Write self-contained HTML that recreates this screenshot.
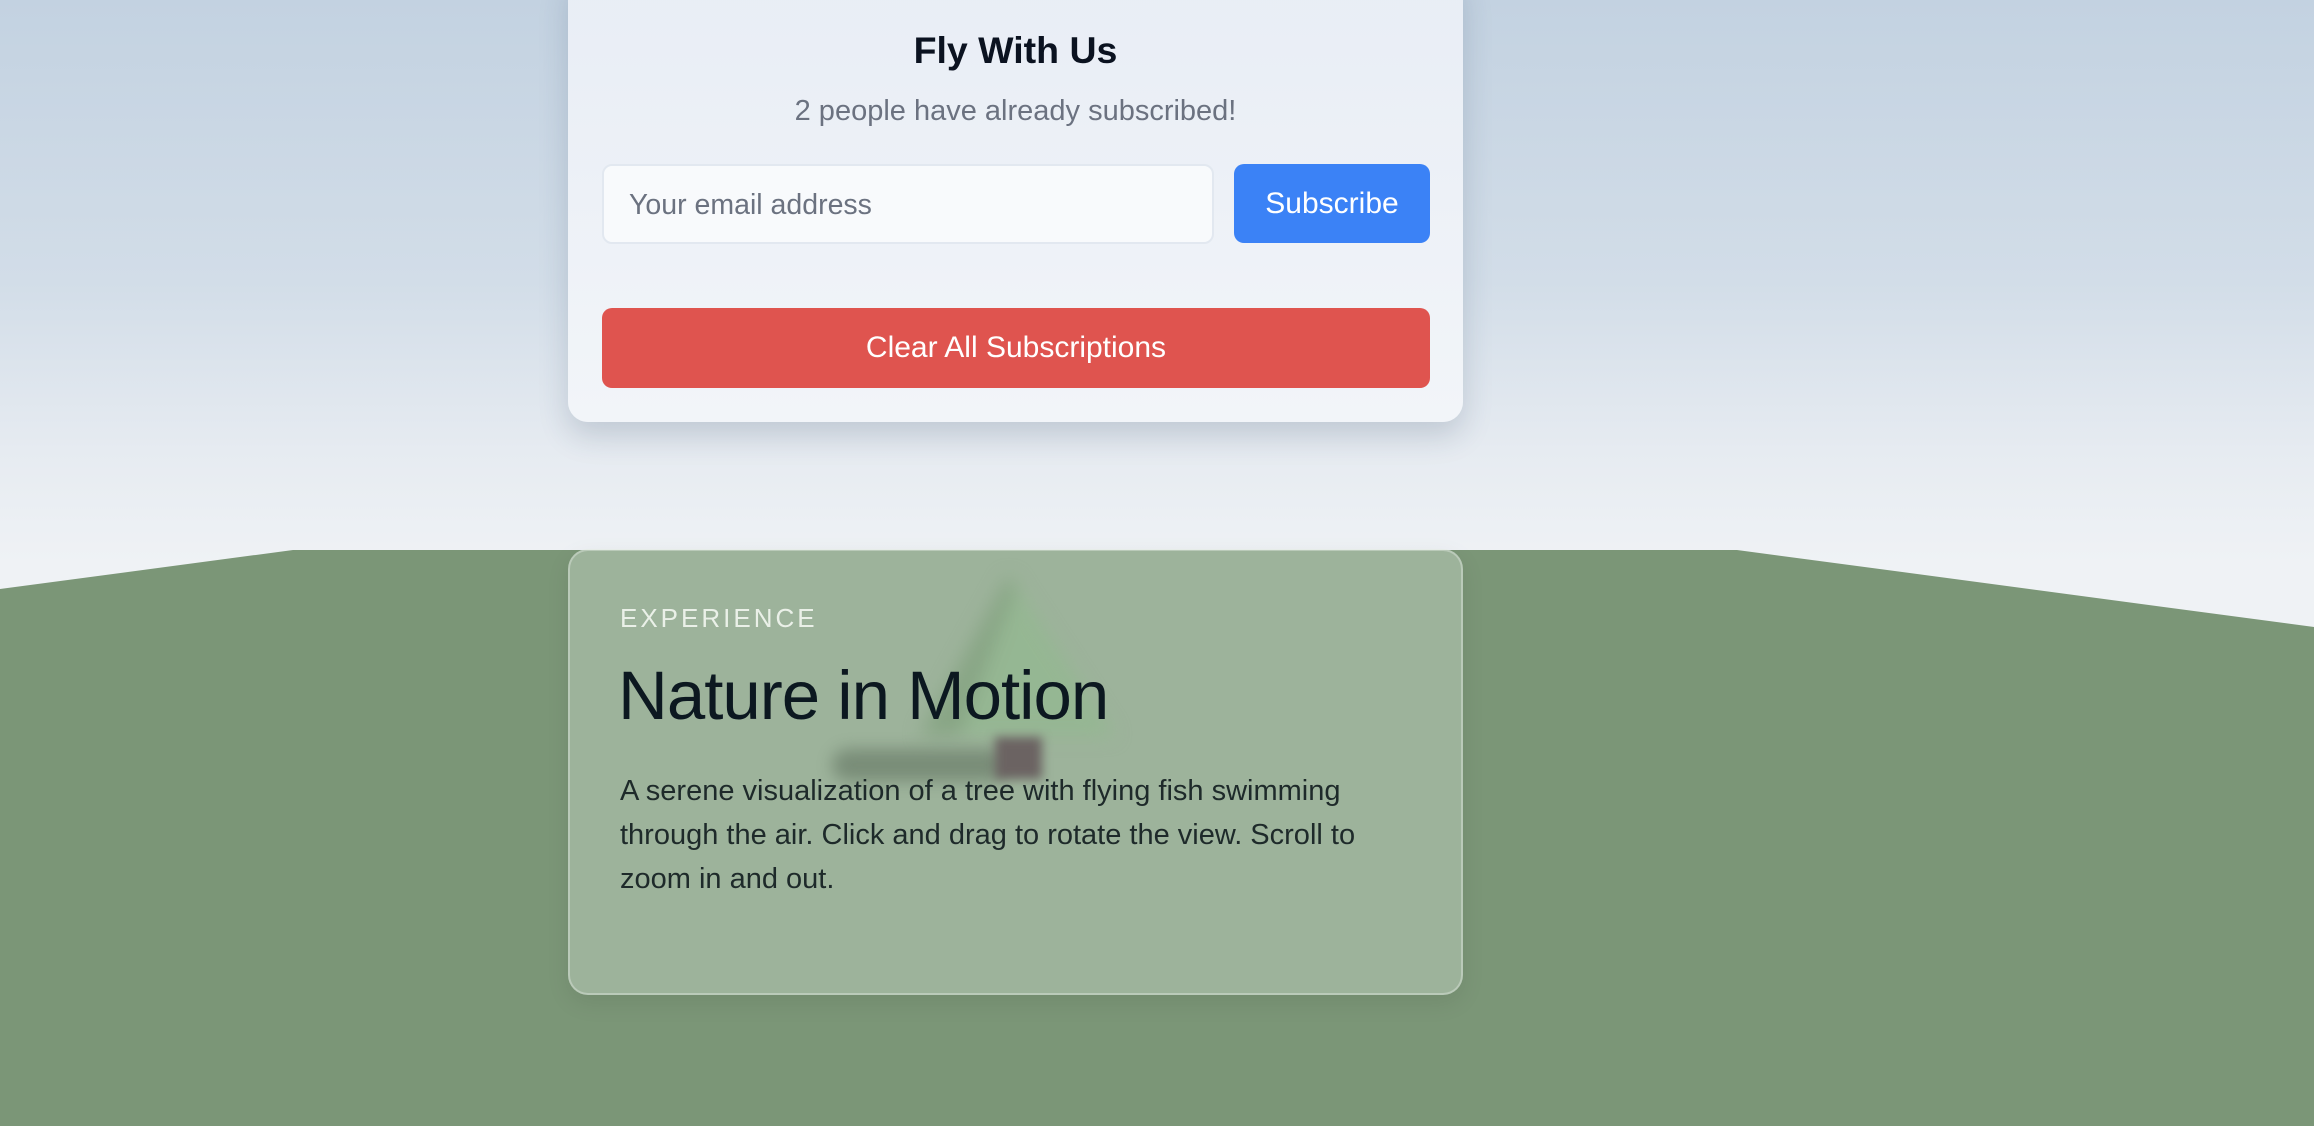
<!DOCTYPE html>
<html><head><meta charset="utf-8"><style>
html,body{margin:0;padding:0;}
body{width:2314px;height:1126px;overflow:hidden;position:relative;font-family:"Liberation Sans",sans-serif;
background:linear-gradient(180deg,#c3d2e1 0%,#d2dde8 25%,#e6ebf1 40%,#eff2f5 50%,#eff2f5 100%);}
#ground{position:absolute;left:0;top:0;}
.card1{position:absolute;left:568px;top:-30px;width:895px;height:452px;border-radius:20px;
background:linear-gradient(180deg,#e8edf5,#f2f5f9);box-shadow:0 14px 30px rgba(40,60,90,0.18);}
.t1{position:absolute;left:0;right:0;top:59px;text-align:center;font-size:37.5px;font-weight:bold;color:#0b1220;}
.sub{position:absolute;left:0;right:0;top:125px;text-align:center;font-size:29px;color:#6b7280;}
.inp{position:absolute;left:34px;top:194px;width:612px;height:80px;box-sizing:border-box;border:2px solid #e2e8f0;border-radius:10px;background:#f8fafc;
font-size:28.5px;color:#6b7280;line-height:78px;padding-left:25px;}
.sbtn{position:absolute;left:666px;top:194px;width:196px;height:79px;border-radius:10px;background:#3b82f6;color:#fff;font-size:30px;text-align:center;line-height:79px;}
.cbtn{position:absolute;left:34px;top:338px;width:828px;height:80px;border-radius:10px;background:#df544f;color:#fff;font-size:30px;text-align:center;line-height:80px;}
.card2{position:absolute;left:568px;top:549px;width:895px;height:446px;box-sizing:border-box;border-radius:20px;
background:rgba(200,215,200,0.45);border:2px solid rgba(255,255,255,0.3);box-shadow:0 8px 24px rgba(0,0,0,0.08);overflow:hidden;}
.exp{position:absolute;left:50px;top:52px;font-size:26px;letter-spacing:3px;color:#eaf0e8;}
.h{position:absolute;left:48px;top:105px;font-size:69px;font-weight:normal;color:#0c1820;letter-spacing:-1px;}
.p{position:absolute;left:50px;top:218px;width:820px;font-size:29px;line-height:44px;color:#1e2a2a;}
.blur{position:absolute;}
</style></head><body>
<svg id="ground" width="2314" height="1126"><polygon points="0,589 293,550 1737,550 2314,627 2314,1126 0,1126" fill="#7b9677"/></svg>
<div class="card2">
<svg class="blur" style="left:0;top:0;filter:blur(9px)" width="895" height="446">
<polygon points="439,24 350,185 545,185" fill="#93b890" opacity="0.75"/>
<polygon points="439,24 350,185 390,185 445,40" fill="#7f9a7c" opacity="0.6"/>
</svg>
<div class="blur" style="left:262px;top:198px;width:175px;height:32px;background:#6d806c;border-radius:16px;opacity:0.75;filter:blur(8px)"></div>
<div class="blur" style="left:425px;top:186px;width:47px;height:42px;background:#6b6362;filter:blur(5px)"></div>
<div class="exp">EXPERIENCE</div>
<div class="h">Nature in Motion</div>
<div class="p">A serene visualization of a tree with flying fish swimming<br>through the air. Click and drag to rotate the view. Scroll to<br>zoom in and out.</div>
</div>
<div class="card1">
<div class="t1">Fly With Us</div>
<div class="sub">2 people have already subscribed!</div>
<div class="inp">Your email address</div>
<div class="sbtn">Subscribe</div>
<div class="cbtn">Clear All Subscriptions</div>
</div>
</body></html>
